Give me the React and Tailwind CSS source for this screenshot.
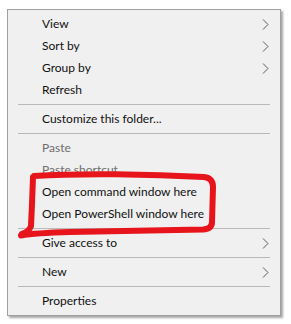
const ITEMS = [
  { label: 'View', sub: true },
  { label: 'Sort by', sub: true },
  { label: 'Group by', sub: true },
  { label: 'Refresh' },
  { sep: true },
  { label: 'Customize this folder...' },
  { sep: true },
  { label: 'Paste', disabled: true },
  { label: 'Paste shortcut', disabled: true },
  { label: 'Open command window here' },
  { label: 'Open PowerShell window here' },
  { sep: true },
  { label: 'Give access to', sub: true },
  { sep: true },
  { label: 'New', sub: true },
  { sep: true },
  { label: 'Properties' },
]

function Chevron() {
  return (
    <svg width="7" height="11" viewBox="0 0 7 11" className="shrink-0">
      <path d="M1 0.5 L6 5.5 L1 10.5" fill="none" stroke="#5a5a5a" strokeWidth="1" />
    </svg>
  )
}

function MenuRow({ label, sub, disabled }) {
  return (
    <div className="flex items-center h-[22px] pl-[34px] pr-[11px]">
      <span className={`flex-1 ${disabled ? 'text-[#6d6d6d]' : 'text-[#111]'}`}>{label}</span>
      {sub && <Chevron />}
    </div>
  )
}

export default function App() {
  return (
    <div className="relative w-[291px] h-[324px] bg-white pt-[9px] pl-[7px]" style={{ fontFamily: 'Lato, "Open Sans", sans-serif' }}>
      <div className="w-[274px] border border-[#a0a0a0] bg-[#f0f0f0] py-[3px] text-[12px] leading-none shadow-[2px_2px_2px_rgba(0,0,0,0.35)]">
        {ITEMS.map((it, i) =>
          it.sep ? (
            <div key={i} className="h-[7px] flex items-center px-[10px]">
              <div className="h-px w-full bg-[#b9b9b9]" />
            </div>
          ) : (
            <MenuRow key={i} {...it} />
          )
        )}
      </div>

      {/* red marker annotation */}
      <svg className="absolute left-0 top-0 pointer-events-none" width="291" height="324" viewBox="0 0 291 324">
        <path
          d="M34 176 C 80 173, 150 174, 204 177 Q 213 178 213 187 L 212 222 Q 212 229 203 229.5 L 70 232 Q 35 233 21 235.5 M 33 177 L 32 204 L 31 226 Q 29 232 22 234"
          fill="none"
          stroke="#e8141b"
          strokeWidth="6"
          strokeLinecap="round"
          strokeLinejoin="round"
        />
      </svg>
    </div>
  )
}
